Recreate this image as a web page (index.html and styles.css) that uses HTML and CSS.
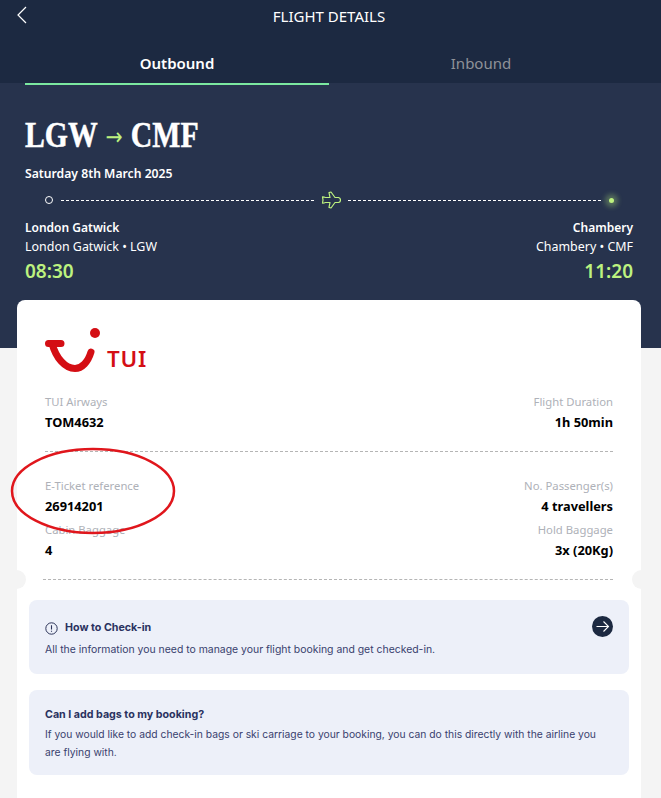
FILE: index.html
```html
<!DOCTYPE html>
<html lang="en">
<head>
    <meta charset="UTF-8">
    <meta name="viewport" content="width=device-width, initial-scale=1.0">
    <title>Flight Details</title>
    <link rel="stylesheet" href="styles.css">
</head>
<body>
    <div class="page">
        <header class="topbar">
            <div class="title-row">
                <svg class="back" width="12" height="18" viewBox="0 0 12 18"><path d="M10 1 2 9l8 8" fill="none" stroke="#fff" stroke-width="1.2"/></svg>
                <span class="title">FLIGHT DETAILS</span>
            </div>
            <div class="tabs">
                <div class="tab active">Outbound</div>
                <div class="tab">Inbound</div>
            </div>
        </header>

        <section class="hero">
            <h1 class="route">LGW <span class="route-arrow">→</span> CMF</h1>
            <div class="date">Saturday 8th March 2025</div>
            <div class="track">
                <span class="dot-start"></span>
                <span class="dash"></span>
                <svg class="plane" width="20" height="20" viewBox="0 0 20 20"><path d="M1.500 6.800 3.500 7.200 4.500 7.500H9L8 2.600 10 2 14 7.500H17.500C18.800 7.800 19.500 9 19.500 10S18.800 12.200 17.500 12.500H14L10 18 8 17.400 9 12.500H4.500L3.500 12.800 1.500 13.200 2 10Z" fill="none" stroke="#bdf27f" stroke-width="1.200" stroke-linejoin="round"/></svg>
                <span class="dash"></span>
                <span class="dot-end"></span>
            </div>
            <div class="places">
                <div class="place">
                    <div class="place-name">London Gatwick</div>
                    <div class="place-code">London Gatwick • LGW</div>
                    <div class="place-time">08:30</div>
                </div>
                <div class="place place-right">
                    <div class="place-name">Chambery</div>
                    <div class="place-code">Chambery • CMF</div>
                    <div class="place-time">11:20</div>
                </div>
            </div>
        </section>

        <main class="card">
            <svg class="logo" width="110" height="46" viewBox="0 0 110 46">
                <path d="M4.500 16.500H17M8 16.500C12 31 21 41.500 31 41.500C38 41.500 44 35 47 25" fill="none" stroke="#d40e14" stroke-width="7" stroke-linecap="round"/>
                <circle cx="51" cy="6" r="5" fill="#d40e14"/>
                <text x="63" y="39.500" class="logo-text">TUI</text>
            </svg>

            <div class="info-row">
                <div>
                    <div class="label">TUI Airways</div>
                    <div class="value">TOM4632</div>
                </div>
                <div class="right">
                    <div class="label">Flight Duration</div>
                    <div class="value">1h 50min</div>
                </div>
            </div>

            <div class="divider"></div>

            <div class="info-row row-ticket">
                <div>
                    <div class="label">E-Ticket reference</div>
                    <div class="value">26914201</div>
                </div>
                <div class="right">
                    <div class="label">No. Passenger(s)</div>
                    <div class="value">4 travellers</div>
                </div>
            </div>
            <div class="info-row row-bags">
                <div>
                    <div class="label">Cabin Baggage</div>
                    <div class="value">4</div>
                </div>
                <div class="right">
                    <div class="label">Hold Baggage</div>
                    <div class="value">3x (20Kg)</div>
                </div>
            </div>

            <div class="divider divider-notched">
                <span class="notch notch-left"></span>
                <span class="notch notch-right"></span>
            </div>

            <div class="panel panel-checkin">
                <div class="panel-head">
                    <svg width="13" height="13" viewBox="0 0 13 13"><circle cx="6.500" cy="6.500" r="5.700" fill="none" stroke="#2b3358" stroke-width="1"/><path d="M6.500 3.200v4.200M6.500 8.800v1" stroke="#2b3358" stroke-width="1.100"/></svg>
                    <span class="panel-title">How to Check-in</span>
                </div>
                <p class="panel-text">All the information you need to manage your flight booking and get checked-in.</p>
                <svg class="go" width="21" height="21" viewBox="0 0 21 21"><circle cx="10.500" cy="10.500" r="10.500" fill="#1c2941"/><path d="M4.500 10.500h12M11.500 5.500l5 5-5 5" fill="none" stroke="#fff" stroke-width="1.100"/></svg>
            </div>

            <div class="panel panel-bags">
                <div class="panel-title">Can I add bags to my booking?</div>
                <p class="panel-text">If you would like to add check-in bags or ski carriage to your booking, you can do this directly with the airline you are flying with.</p>
            </div>
        </main>

        <svg class="circle-mark" width="170" height="92" viewBox="0 0 170 92"><ellipse cx="85" cy="46" rx="81" ry="42" fill="none" stroke="#e0161c" stroke-width="2.500"/></svg>
    </div>
</body>
</html>
```

FILE: styles.css
```css
* {
    box-sizing: border-box;
}
html, body {
    margin: 0;
    padding: 0;
}
body {
    font-family: "Noto Sans", Arial, sans-serif;
    background: #f4f4f4;
}
.page {
    position: relative;
    width: 661px;
    height: 798px;
    overflow: hidden;
    background: #f4f4f4;
}
.topbar {
    background: #1c2941;
    height: 83px;
    padding: 0 25px;
    color: #fff;
}
.title-row {
    position: relative;
    height: 46px;
    padding-top: 5px;
    text-align: center;
}
.back {
    position: absolute;
    left: -9px;
    top: 6px;
}
.title {
    font-size: 15px;
    line-height: 20px;
    margin-right: 3px;
}
.tabs {
    display: flex;
    width: 608px;
}
.tab {
    width: 304px;
    height: 39px;
    padding-top: 6px;
    text-align: center;
    font-size: 15px;
    line-height: 22px;
    color: #8f9298;
}
.tab.active {
    color: #fff;
    font-weight: 600;
    border-bottom: 2px solid #7be8a0;
}
.hero {
    background: #27334d;
    height: 265px;
    padding: 35px 28px 0 25px;
    color: #fff;
}
.route {
    margin: 0;
    height: 36px;
    font-family: "Liberation Serif", serif;
    font-size: 35px;
    line-height: 36px;
    font-weight: 700;
    white-space: nowrap;
    -webkit-text-stroke: 0.5px #fff;
    transform: scaleX(0.85);
    transform-origin: left center;
}
.route-arrow {
    position: relative;
    top: -2px;
    margin: 0 1px;
    font-family: "DejaVu Sans", sans-serif;
    font-weight: 400;
    font-size: 24px;
    color: #bdf27f;
    -webkit-text-stroke: 0;
}
.date {
    margin-top: 11px;
    font-size: 12.200px;
    line-height: 18px;
    font-weight: 600;
}
.track {
    display: flex;
    align-items: center;
    height: 20px;
    margin-top: 7px;
    padding-left: 20px;
    padding-right: 16px;
    gap: 8px;
}
.dot-start {
    width: 8px;
    height: 8px;
    border: 1px solid #fff;
    border-radius: 50%;
    flex: none;
}
.dash {
    flex: 1;
    border-top: 1px dashed #fff;
}
.plane {
    flex: none;
    margin: 0 -1px;
}
.dot-end {
    width: 5px;
    height: 5px;
    margin: 0 3px 0 0;
    border-radius: 50%;
    background: #bdf27f;
    box-shadow: 0 0 5px 4px rgba(189, 242, 127, 0.3);
    flex: none;
}
.places {
    display: flex;
    justify-content: space-between;
    margin-top: 8px;
}
.place-right {
    text-align: right;
}
.place-name {
    font-size: 12px;
    line-height: 19px;
    font-weight: 600;
}
.place-code {
    font-size: 12.450px;
    line-height: 19px;
}
.place-time {
    font-size: 19px;
    line-height: 24px;
    margin-top: 3px;
    font-weight: 600;
    color: #bdf27f;
}
.card {
    position: absolute;
    left: 17px;
    top: 300px;
    width: 624px;
    height: 498px;
    background: #fff;
    border-radius: 8px 8px 0 0;
    padding: 27px 12px 0;
}
.logo {
    display: block;
    margin-left: 15px;
}
.info-row {
    display: flex;
    justify-content: space-between;
    padding: 0 16px;
}
.card > .info-row:nth-of-type(1) {
    margin-top: 20px;
}
.label {
    font-size: 11.300px;
    line-height: 18px;
    color: #aeb1b8;
}
.value {
    font-family: "Noto Sans", sans-serif;
    font-size: 12.800px;
    line-height: 20px;
    margin-top: 1px;
    font-weight: 700;
    color: #000;
}
.right {
    text-align: right;
}
.divider {
    position: relative;
    margin: 19px 16px 0;
    border-top: 1px dashed #b5b5b5;
}
.row-ticket {
    margin-top: 25px;
}
.row-bags {
    margin-top: 5px;
}
.divider-notched {
    margin: 19px 16px 0 14px;
}
.notch {
    position: absolute;
    top: -10px;
    width: 19px;
    height: 19px;
    border-radius: 50%;
    background: #f4f4f4;
}
.notch-left {
    left: -36px;
}
.notch-right {
    right: -38px;
}
.panel {
    position: relative;
    background: #edf0f9;
    border-radius: 8px;
    padding: 16px;
    color: #2b3358;
}
.panel-checkin {
    height: 74px;
    margin-top: 20px;
    padding-top: 19px;
}
.panel-bags {
    height: 85px;
    margin-top: 16px;
    padding-top: 16px;
}
.panel-head {
    display: flex;
    align-items: center;
    gap: 7px;
}
.panel-title {
    font-family: Inter, sans-serif;
    font-size: 10.700px;
    line-height: 18px;
    font-weight: 700;
    color: #2a3260;
}
.panel-text {
    margin: 1px 0 0;
    font-family: Inter, sans-serif;
    font-size: 10.320px;
    line-height: 18px;
    color: #39416e;
}
.panel-checkin .panel-text {
    margin-top: 4px;
    font-size: 10.430px;
}
.go {
    position: absolute;
    right: 16px;
    top: 16px;
}
.logo-text {
    font-family: "Noto Sans", sans-serif;
    font-size: 22.400px;
    font-weight: 600;
    letter-spacing: 0.8px;
    fill: #d40e14;
}
.circle-mark {
    position: absolute;
    left: 8px;
    top: 445px;
}
```
